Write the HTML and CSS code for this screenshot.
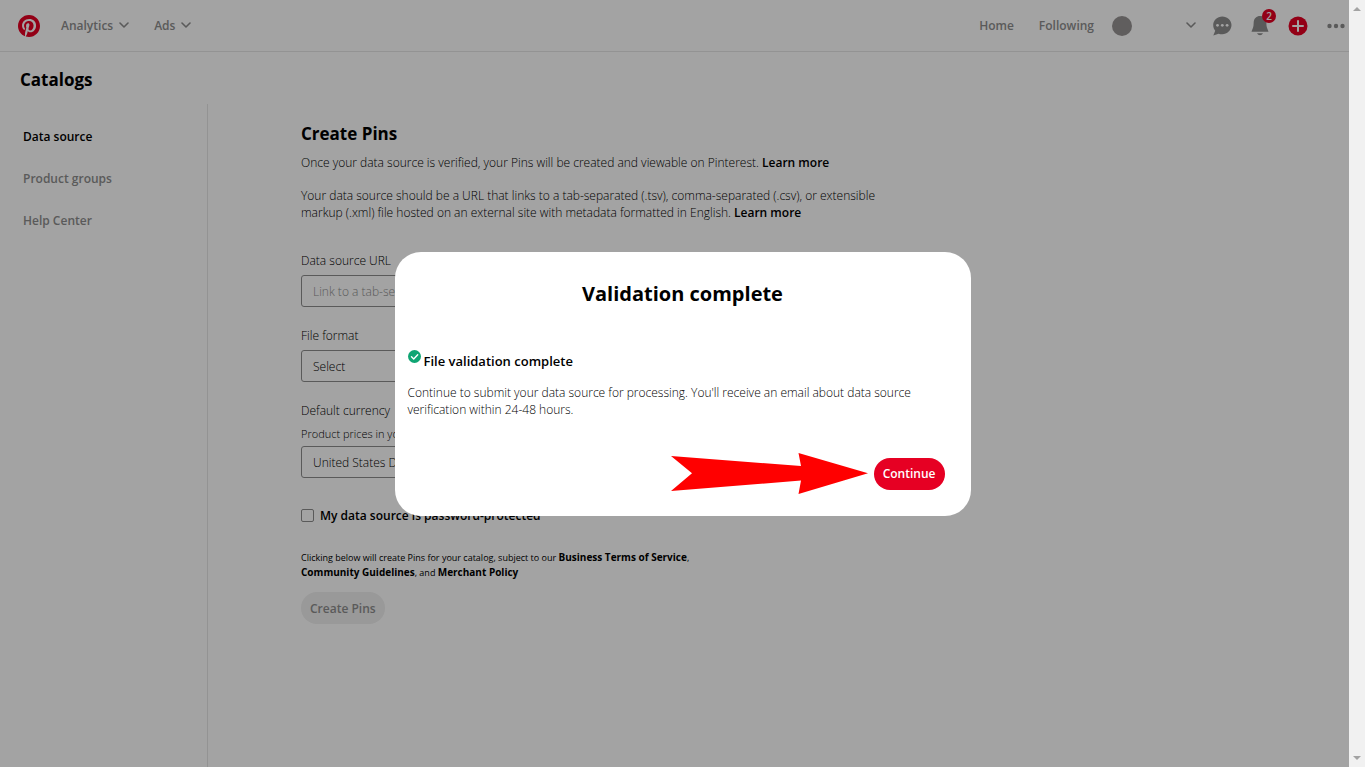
FILE: index.html
```html
<!DOCTYPE html>
<html lang="en">
<head>
<meta charset="utf-8">
<meta name="viewport" content="width=device-width, initial-scale=1">
<title>Catalogs</title>
<link rel="stylesheet" href="styles.css">
</head>
<body>
<div class="page">
  <header class="topbar">
    <a class="logo" href="#" aria-label="Pinterest">
      <svg width="22" height="22" viewBox="0 0 24 24"><circle cx="12" cy="12" r="11.5" fill="#fff"/><path fill="#e60023" d="M0 12c0 5.123 3.211 9.497 7.73 11.218-.11-.937-.227-2.482.025-3.566.217-.932 1.401-5.938 1.401-5.938s-.357-.715-.357-1.774c0-1.66.962-2.9 2.161-2.9 1.02 0 1.512.765 1.512 1.682 0 1.025-.653 2.557-.99 3.978-.281 1.189.597 2.159 1.769 2.159 2.123 0 3.756-2.239 3.756-5.471 0-2.861-2.056-4.86-4.991-4.86-3.398 0-5.393 2.549-5.393 5.184 0 1.027.395 2.127.889 2.726a.36.36 0 0 1 .083.343c-.091.378-.293 1.189-.332 1.355-.053.218-.173.265-.4.159-1.492-.694-2.424-2.875-2.424-4.627 0-3.769 2.737-7.229 7.892-7.229 4.144 0 7.365 2.953 7.365 6.899 0 4.117-2.595 7.431-6.199 7.431-1.211 0-2.348-.63-2.738-1.373 0 0-.599 2.282-.744 2.84-.282 1.084-1.064 2.456-1.549 3.235C9.584 23.815 10.77 24 12 24c6.627 0 12-5.373 12-12S18.627 0 12 0 0 5.373 0 12"/></svg>
    </a>
    <nav class="menus">
      <button class="navitem" type="button">Analytics <svg width="10" height="7" viewBox="0 0 10 7"><path class="chev" d="M1 1l4 4 4-4"/></svg></button>
      <button class="navitem" type="button">Ads <svg width="10" height="7" viewBox="0 0 10 7"><path class="chev" d="M1 1l4 4 4-4"/></svg></button>
    </nav>
    <nav class="links">
      <a class="navitem" href="#">Home</a>
      <a class="navitem" href="#">Following</a>
    </nav>
    <button class="account" type="button" aria-label="Account"><span class="avatar"></span><svg width="10" height="7" viewBox="0 0 10 7"><path class="chev" d="M1 1l4 4 4-4"/></svg></button>
    <div class="tools">
      <button class="tool" type="button" aria-label="Messages"><svg width="20" height="20" viewBox="0 0 20 20"><path fill="#8e8e8e" d="M10.300 0.500C5.300 0.500 1.200 4.300 1.200 9c0 2.300.8 4.200 2 5.800L1.300 19.400l5.300-1.700c1 .4 2.400.6 3.700.6 4.800 0 9.200-4.300 9.200-9.300 0-4.700-4.200-8.500-9.200-8.500z"/><g fill="#fff"><circle cx="5.500" cy="9.300" r="1.400"/><circle cx="10.300" cy="9.300" r="1.400"/><circle cx="15.100" cy="9.300" r="1.400"/></g></svg></button>
      <button class="tool" type="button" aria-label="Notifications"><svg width="20" height="20" viewBox="0 0 20 20"><path fill="#8e8e8e" d="M10 0C6.500 0 4 2.400 3.700 6L3.500 9.500C3.300 11.700 2.300 13 1.500 15.700h17c-.8-2.700-1.800-4-2-6.200L16.300 6C16 2.400 13.500 0 10 0zM7 17.300c.7 1.300 1.700 1.900 3 1.900s2.300-.6 3-1.900z"/></svg><span class="badge">2</span></button>
      <button class="tool" type="button" aria-label="Create"><svg width="20" height="20" viewBox="0 0 20 20"><circle cx="10" cy="10" r="9.500" fill="#e60023"/><path d="M10 5v10M5 10h10" stroke="#fff" stroke-width="2" stroke-linecap="round"/></svg></button>
      <button class="tool" type="button" aria-label="More"><svg width="20" height="20" viewBox="0 0 20 20" fill="#8e8e8e"><circle cx="3.500" cy="10" r="2.200"/><circle cx="10" cy="10" r="2.200"/><circle cx="16.500" cy="10" r="2.200"/></svg></button>
    </div>
  </header>

  <h1 class="title">Catalogs</h1>

  <div class="columns">
    <nav class="sidebar">
      <a class="side current" href="#">Data source</a>
      <a class="side" href="#">Product groups</a>
      <a class="side" href="#">Help Center</a>
    </nav>
    <main class="content">
      <h2 class="heading">Create Pins</h2>
      <p class="text">Once your data source is verified, your Pins will be created and viewable on Pinterest. <a href="#">Learn more</a></p>
      <p class="text">Your data source should be a URL that links to a tab-separated (.tsv), comma-separated (.csv), or extensible markup (.xml) file hosted on an external site with metadata formatted in English. <a href="#">Learn more</a></p>
      <form class="form">
        <div class="field">
          <label class="label" for="url">Data source URL</label>
          <input class="control" id="url" type="text" placeholder="Link to a tab-separated file">
        </div>
        <div class="field">
          <label class="label" for="format">File format</label>
          <select class="control" id="format"><option>Select</option></select>
        </div>
        <div class="field">
          <label class="label" for="currency">Default currency</label>
          <p class="hint">Product prices in your data source</p>
          <select class="control" id="currency"><option>United States Dollar</option></select>
        </div>
        <div class="check">
          <input class="box" id="protected" type="checkbox">
          <label for="protected">My data source is password-protected</label>
        </div>
        <p class="terms">Clicking below will create Pins for your catalog, subject to our <a href="#">Business Terms of Service</a>, <a href="#">Community Guidelines</a>, and <a href="#">Merchant Policy</a></p>
        <button class="pill create" type="button">Create Pins</button>
      </form>
    </main>
  </div>
</div>

<div class="overlay">
  <section class="dialog" role="dialog" aria-modal="true" aria-labelledby="dialog-title">
    <h2 class="dialog-title" id="dialog-title">Validation complete</h2>
    <div class="status">
      <svg class="tick" width="13" height="13" viewBox="0 0 13 13"><circle cx="6.500" cy="6.500" r="6.500" fill="#0fa573"/><path d="M3.500 6.800l2.200 2.100 4-4.200" fill="none" stroke="#fff" stroke-width="1.400" stroke-linecap="round" stroke-linejoin="round"/></svg>
      <strong>File validation complete</strong>
    </div>
    <p class="message">Continue to submit your data source for processing. You'll receive an email about data source verification within 24-48 hours.</p>
    <div class="actions">
      <svg class="arrow" width="197" height="42" viewBox="0 0 197 42"><path fill="#f00" d="M0 3L130 13 127.500 0 197 20.300 127.500 41 130 27.500 0 38 21 20.300z"/></svg>
      <button class="pill continue" type="button">Continue</button>
    </div>
  </section>
</div>

<div class="scrollbar" aria-hidden="true">
  <svg width="8" height="4" viewBox="0 0 8 4"><path fill="#a3a3a3" d="M0 4l4-4 4 4z"/></svg>
  <svg width="8" height="4" viewBox="0 0 8 4"><path fill="#a3a3a3" d="M0 0l4 4 4-4z"/></svg>
</div>
</body>
</html>
```
FILE: styles.css
```css
* { box-sizing: border-box; }
body {
  margin: 0;
  background: #fff;
  color: #000;
  font-family: "Open Sans", "Noto Sans", sans-serif;
  font-size: 12px;
  font-weight: 300;
  line-height: 17px;
}
h1, h2, p { margin: 0; }
a { color: inherit; text-decoration: none; }
button, input, select { font: inherit; color: inherit; }
button { border: 0; padding: 0; background: none; }

.page { min-height: 100vh; padding-right: 16px; display: flex; flex-direction: column; }

.topbar {
  display: flex;
  align-items: center;
  height: 52px;
  padding: 0 3px 0 18px;
  border-bottom: 1px solid #e6e6e6;
}
.logo { display: flex; }
.menus { display: flex; gap: 25px; margin-left: 21px; flex: 1; }
.links { display: flex; gap: 25px; }
.navitem {
  display: flex;
  align-items: center;
  gap: 6px;
  font-weight: 600;
  color: #8e8e8e;
}
.chev { fill: none; stroke: #8e8e8e; stroke-width: 1.6; stroke-linecap: round; stroke-linejoin: round; }
.account {
  display: flex;
  align-items: center;
  justify-content: space-between;
  width: 84px;
  margin-left: 18px;
}
.avatar { width: 20px; height: 20px; border-radius: 50%; background: #979393; }
.tools { display: flex; gap: 18px; margin-left: 16px; }
.tool { position: relative; display: flex; }
.badge {
  position: absolute;
  top: -7px;
  right: -6px;
  width: 14px;
  height: 14px;
  border-radius: 50%;
  background: #e60023;
  color: #fff;
  font-size: 10px;
  font-weight: 600;
  line-height: 14px;
}

.title { padding: 15px 20px 0; font-size: 17px; line-height: 25px; font-weight: 700; height: 52px; }
.columns { display: flex; flex: 1; }
.sidebar {
  display: flex;
  flex-direction: column;
  gap: 25px;
  width: 208px;
  padding: 24px 23px;
  border-right: 1px solid #e6e6e6;
}
.side { font-weight: 600; color: #8e8e8e; }
.side.current { color: #000; }

.content { flex: 1; padding: 18px 24px 0 93px; }
.heading { font-size: 17px; line-height: 24px; font-weight: 700; margin-bottom: 8px; }
.text { max-width: 590px; margin-bottom: 16px; }
.text a { font-weight: 600; }
.form { max-width: 576px; padding-top: 15px; }
.field { display: flex; flex-direction: column; margin-bottom: 20px; }
.label { margin-bottom: 6px; }
.hint { font-size: 11px; margin-bottom: 4px; }
.control {
  appearance: none;
  width: 100%;
  height: 32px;
  padding: 0 11px;
  border: 1px solid #8e8e8e;
  border-radius: 3px;
  background: #fff;
}
.control::placeholder { color: #8e8e8e; opacity: 1; }
.check { display: flex; align-items: center; gap: 6px; margin: 29px 0 26px; font-weight: 600; }
.box {
  appearance: none;
  width: 13px;
  height: 13px;
  margin: 0;
  border: 1px solid #8e8e8e;
  border-radius: 2px;
}
.terms { max-width: 400px; margin-bottom: 12px; font-size: 9px; font-weight: 400; line-height: 15px; }
.terms a { font-size: 10px; font-weight: 700; }
.pill {
  height: 32px;
  padding: 0 9px;
  border-radius: 16px;
  font-weight: 600;
}
.create { background: #efefef; color: #8e8e8e; }

.overlay {
  position: fixed;
  inset: 0;
  display: flex;
  align-items: center;
  justify-content: center;
  background: rgba(0, 0, 0, 0.36);
}
.dialog {
  width: 576px;
  max-width: 90%;
  padding: 28px 26px 26px 13px;
  border-radius: 26px;
  background: #fff;
}
.dialog-title {
  padding-left: 13px;
  font-size: 20px;
  line-height: 28px;
  font-weight: 700;
  text-align: center;
}
.status { display: flex; align-items: flex-start; gap: 3px; margin-top: 42px; font-size: 13px; line-height: 22px; }
.status strong { font-weight: 600; }
.message { max-width: 516px; margin-top: 12px; }
.actions { display: flex; align-items: center; justify-content: flex-end; gap: 6px; margin-top: 40px; }
.arrow { margin: -5px 0; }
.continue { background: #e60023; color: #fff; }

.scrollbar {
  position: fixed;
  top: 0;
  right: 0;
  bottom: 0;
  width: 16px;
  padding: 7px 0;
  display: flex;
  flex-direction: column;
  align-items: center;
  justify-content: space-between;
  background: #f1f1f1;
}
```
